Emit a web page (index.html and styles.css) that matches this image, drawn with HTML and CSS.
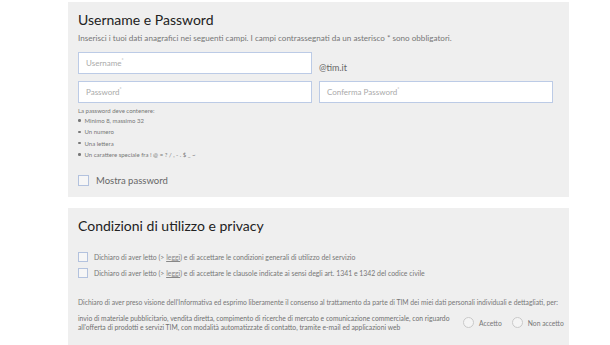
FILE: index.html
```html
<!DOCTYPE html>
<html lang="it">
  <head>
    <meta charset="UTF-8" />
    <title>Registrazione</title>
    <link rel="stylesheet" href="styles.css">
  </head>
  <body>
    <div class="page">
      <section class="panel panel-account">
        <h2>Username e Password</h2>
        <p class="intro">Inserisci i tuoi dati anagrafici nei seguenti campi. I campi contrassegnati da un asterisco * sono obbligatori.</p>

        <div class="row row-user">
          <div class="field">Username<sup>*</sup></div>
          <span class="domain">@tim.it</span>
        </div>
        <div class="row">
          <div class="field">Password<sup>*</sup></div>
          <div class="field">Conferma Password<sup>*</sup></div>
        </div>

        <div class="rules">
          <p>La password deve contenere:</p>
          <ul>
            <li>Minimo 8, massimo 32</li>
            <li>Un numero</li>
            <li>Una lettera</li>
            <li>Un carattere speciale fra ! @ = ? / , - . $ _ ~</li>
          </ul>
        </div>

        <label class="check check-big"><span class="box"></span><span>Mostra password</span></label>
      </section>

      <section class="panel panel-terms">
        <h2>Condizioni di utilizzo e privacy</h2>

        <div class="terms">
          <label class="check"><span class="box"></span><span>Dichiaro di aver letto (&gt; <u>leggi</u>) e di accettare le condizioni generali di utilizzo del servizio</span></label>
          <label class="check"><span class="box"></span><span>Dichiaro di aver letto (&gt; <u>leggi</u>) e di accettare le clausole indicate ai sensi degli art. 1341 e 1342 del codice civile</span></label>
        </div>

        <p class="consent">Dichiaro di aver preso visione dell'Informativa ed esprimo liberamente il consenso al trattamento da parte di TIM dei miei dati personali individuali e dettagliati, per:</p>

        <div class="choice">
          <p>invio di materiale pubblicitario, vendita diretta, compimento di ricerche di mercato e comunicazione commerciale, con riguardo all'offerta di prodotti e servizi TIM, con modalità automatizzate di contatto, tramite e-mail ed applicazioni web</p>
          <label class="radio"><span class="dot"></span><span>Accetto</span></label>
          <label class="radio"><span class="dot"></span><span>Non accetto</span></label>
        </div>
      </section>
    </div>
  </body>
</html>
```

FILE: styles.css
```css
body {
  margin: 0;
  background: #fff;
  font-family: Lato, "Noto Sans", sans-serif;
  color: #6f6f6f;
}

.page {
  width: 501px;
  margin-left: 68px;
  padding-top: 2px;
  display: flex;
  flex-direction: column;
  gap: 11px;
}

.panel {
  background: #efefef;
  padding: 8px 10px 0 10px;
}

.panel-account {
  height: 187px;
}

.panel-terms {
  height: 140px;
}

h2 {
  margin: 0;
  font-size: 14px;
  font-weight: 400;
  color: #222;
  line-height: 20px;
}

.intro {
  margin: 3px 0 0;
  font-size: 8.1px;
  line-height: 10px;
  color: #777;
}

.row {
  display: flex;
  gap: 7px;
  margin-top: 7px;
}

.row-user {
  margin-top: 9px;
  align-items: flex-end;
}

.field {
  box-sizing: border-box;
  width: 234px;
  height: 22px;
  border: 1px solid #bccbe6;
  background: #fff;
  padding: 0 7px;
  font-size: 8px;
  line-height: 20px;
  color: #aaa;
}

.field sup {
  font-size: 5px;
  vertical-align: 4px;
  line-height: 0;
}

.domain {
  font-size: 9px;
  color: #666;
  line-height: 10px;
  margin-bottom: 1px;
}

.rules {
  margin-top: 4px;
  font-size: 6px;
  color: #777;
}

.rules p {
  margin: 0;
  line-height: 8px;
}

.rules ul {
  margin: 0;
  padding: 0;
  list-style: none;
}

.rules li {
  line-height: 11.3px;
  display: flex;
  align-items: center;
  gap: 4px;
}

.rules li::before {
  content: "";
  width: 2.5px;
  height: 2.5px;
  border-radius: 50%;
  background: #777;
}

.check {
  display: flex;
  align-items: center;
  gap: 6px;
  font-size: 6.9px;
  color: #777;
}

.box {
  box-sizing: border-box;
  flex: 0 0 auto;
  width: 10px;
  height: 10px;
  border: 1px solid #b3c2de;
  background: #f6f6f6;
}

.check-big {
  margin-top: 15px;
  font-size: 9.5px;
  color: #666;
  gap: 7px;
}

.check-big .box {
  width: 11px;
  height: 11px;
}

.terms {
  margin-top: 16px;
  display: flex;
  flex-direction: column;
  gap: 6px;
}

.terms u {
  color: #888;
}

.consent {
  margin: 20px 0 0;
  font-size: 6.75px;
  line-height: 9px;
  color: #777;
  white-space: nowrap;
}

.choice {
  margin-top: 7px;
  display: flex;
  align-items: center;
  font-size: 6.75px;
}

.choice p {
  flex: none;
  margin: 0 13px 0 0;
  width: 372px;
  line-height: 8.5px;
}

.radio {
  display: flex;
  align-items: center;
  gap: 5px;
  color: #777;
  white-space: nowrap;
}

.radio + .radio {
  margin-left: 10px;
}

.dot {
  box-sizing: border-box;
  width: 11px;
  height: 11px;
  border: 1px solid #c9c9c9;
  border-radius: 50%;
  background: #f4f4f4;
}
```
